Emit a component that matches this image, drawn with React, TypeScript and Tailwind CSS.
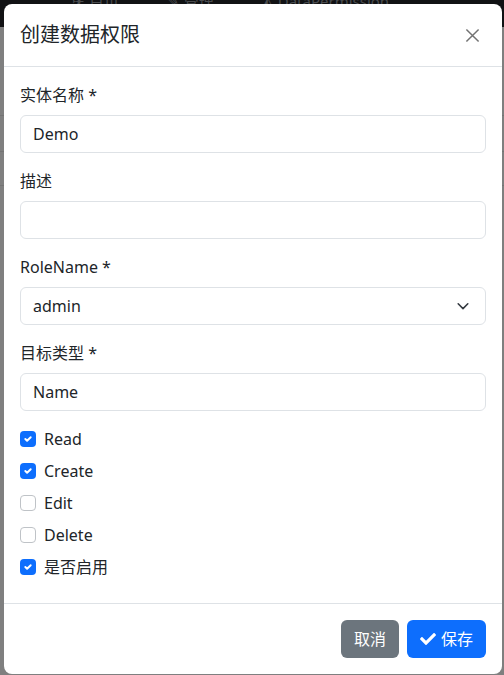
import { ReactNode } from "react";

const font = {
  fontFamily: '"Noto Sans", "Noto Sans CJK SC", sans-serif',
};

const Label = ({ children }: { children: ReactNode }) => (
  <label className="mb-2 block text-[16px] leading-6 text-[#212529]">{children}</label>
);

const TextInput = ({ value }: { value?: string }) => (
  <div className="flex h-[38px] items-center rounded-[6px] border border-[#dee2e6] bg-white px-3 text-[16px] text-[#212529]">
    {value}
  </div>
);

const SelectInput = ({ value }: { value: string }) => (
  <div className="flex h-[38px] items-center justify-between rounded-[6px] border border-[#dee2e6] bg-white pl-3 pr-[15px] text-[16px] text-[#212529]">
    <span>{value}</span>
    <svg width="14" height="14" viewBox="0 0 16 16" fill="none">
      <path
        d="m2.5 5.5 5.5 5.5 5.5-5.5"
        stroke="#343a40"
        strokeWidth="1.8"
        strokeLinecap="round"
        strokeLinejoin="round"
      />
    </svg>
  </div>
);

const Check = ({ label, checked }: { label: string; checked?: boolean }) => (
  <div className="flex h-6 items-center gap-2 text-[16px] text-[#212529]">
    {checked ? (
      <span className="flex h-4 w-4 items-center justify-center rounded-[4px] bg-[#0d6efd]">
        <svg width="12" height="12" viewBox="0 0 20 20" fill="none">
          <path
            d="m5.5 10 3 3 6-6"
            stroke="white"
            strokeWidth="3.2"
            strokeLinecap="round"
            strokeLinejoin="round"
          />
        </svg>
      </span>
    ) : (
      <span className="h-4 w-4 rounded-[4px] border border-[#bfc3c7] bg-white" />
    )}
    <span>{label}</span>
  </div>
);

const App = () => (
  <div className="relative h-[675px] w-[504px] overflow-hidden bg-[#7f7f7f]" style={font}>
    {/* page behind the backdrop */}
    <div className="h-[37px] bg-[#111214]">
      <div className="-mt-[10px] flex gap-12 pl-[72px] text-[15px] text-[#4a4c4f]">
        <span>✈ 首页</span>
        <span>✎ 管理</span>
        <span>◭ DataPermission</span>
      </div>
    </div>
    <div className="border-b border-[#747474] pt-[88px]" />
    <div className="h-[36px] border-b border-[#747474]" />
    <div className="h-[34px] border-b border-[#747474]" />

    {/* modal */}
    <div className="absolute left-[4px] top-[4px] flex h-[670px] w-[498px] flex-col rounded-[8px] bg-white">
      <div className="flex h-[63px] items-center justify-between border-b border-[#dee2e6] px-4">
        <h5 className="text-[20px] font-normal leading-[30px] text-[#212529]">创建数据权限</h5>
        <button className="mr-[2px] flex h-6 w-6 items-center justify-center opacity-55">
          <svg width="15" height="15" viewBox="0 0 16 16">
            <path
              d="M1.5 1.5 14.5 14.5M14.5 1.5 1.5 14.5"
              stroke="#000"
              strokeWidth="1.6"
            />
          </svg>
        </button>
      </div>

      <div className="flex-1 px-4 pt-4">
        <div className="mb-4">
          <Label>实体名称 *</Label>
          <TextInput value="Demo" />
        </div>
        <div className="mb-4">
          <Label>描述</Label>
          <TextInput />
        </div>
        <div className="mb-4">
          <Label>RoleName *</Label>
          <SelectInput value="admin" />
        </div>
        <div className="mb-4">
          <Label>目标类型 *</Label>
          <TextInput value="Name" />
        </div>
        <div className="flex flex-col gap-2">
          <Check label="Read" checked />
          <Check label="Create" checked />
          <Check label="Edit" />
          <Check label="Delete" />
          <Check label="是否启用" checked />
        </div>
      </div>

      <div className="flex h-[71px] items-start justify-end gap-2 border-t border-[#dee2e6] px-4 pt-4">
        <button className="h-[38px] rounded-[6px] bg-[#6c757d] px-[13px] text-[16px] text-white">
          取消
        </button>
        <button className="flex h-[38px] items-center gap-[5px] rounded-[6px] bg-[#0d6efd] px-[13px] text-[16px] text-white">
          <svg width="16" height="16" viewBox="0 0 512 512" fill="white">
            <path d="M173.9 439.4 7.5 273c-10-10-10-26.2 0-36.2l36.2-36.2c10-10 26.2-10 36.2 0L192 312.7 432.1 72.6c10-10 26.2-10 36.2 0l36.2 36.2c10 10 10 26.2 0 36.2L210.1 439.4c-10 10-26.2 10-36.2 0z" />
          </svg>
          保存
        </button>
      </div>
    </div>
  </div>
);

export default App;
